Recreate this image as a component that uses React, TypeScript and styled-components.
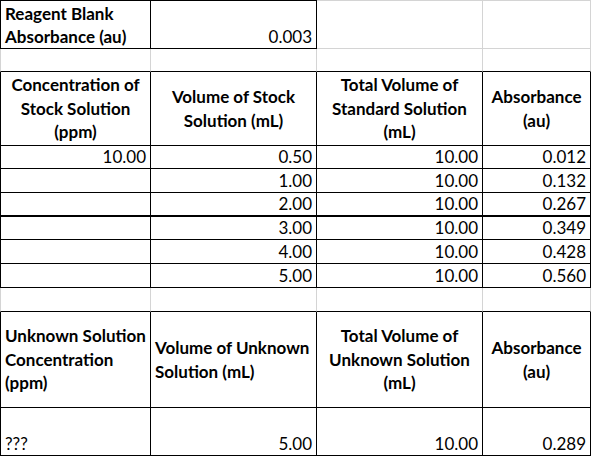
import styled, { createGlobalStyle } from 'styled-components'

const INK = '#000000'
const GRID = '#d4d4d4'

const GlobalStyle = createGlobalStyle`
  html, body {
    margin: 0;
    padding: 0;
    background: #ffffff;
  }
`

const Sheet = styled.table`
  border-collapse: separate;
  border-spacing: 0;
  table-layout: fixed;
  width: 591px;
  font-family: Lato, 'Open Sans', sans-serif;
  font-size: 17px;
  color: #000;
`

const Row = styled.tr<{ $h: number }>`
  height: ${({ $h }) => $h}px;
`

const Cell = styled.td<{
  $align?: 'left' | 'right' | 'center'
  $right?: string
  $bottom?: string
  $top?: string
  $left?: string
  $thick?: boolean
}>`
  box-sizing: border-box;
  padding: 0 4px 1px 4px;
  line-height: 21px;
  white-space: nowrap;
  overflow: hidden;
  text-align: ${({ $align }) => $align || 'right'};
  vertical-align: bottom;
  font-weight: 400;
  border-right: 1px solid ${({ $right }) => $right || INK};
  border-bottom: ${({ $thick }) => ($thick ? 2 : 1)}px solid ${({ $bottom }) => $bottom || INK};
  border-top: ${({ $top }) => ($top ? `1px solid ${$top}` : 'none')};
  border-left: ${({ $left }) => ($left ? `1px solid ${$left}` : 'none')};
`

const LabelCell = styled(Cell)`
  font-weight: 700;
  line-height: 23px;
  padding-bottom: 0;
`

const HeadCell = styled(Cell)`
  font-weight: 700;
  line-height: 23.5px;
  padding-bottom: 0;
  vertical-align: middle;
  text-align: ${({ $align }) => $align || 'center'};
`

const Col = styled.col<{ $w: number }>`
  width: ${({ $w }) => $w}px;
`

const standards = [
  { conc: '10.00', vol: '0.50', total: '10.00', abs: '0.012', h: 23 },
  { conc: '', vol: '1.00', total: '10.00', abs: '0.132', h: 24 },
  { conc: '', vol: '2.00', total: '10.00', abs: '0.267', h: 24, thick: true },
  { conc: '', vol: '3.00', total: '10.00', abs: '0.349', h: 23 },
  { conc: '', vol: '4.00', total: '10.00', abs: '0.428', h: 24 },
  { conc: '', vol: '5.00', total: '10.00', abs: '0.560', h: 24 },
]

const SpacerRow = ({ h }: { h: number }) => (
  <Row $h={h}>
    <Cell $left={GRID} $right={GRID} />
    <Cell $right={GRID} />
    <Cell $right={GRID} />
    <Cell $right={GRID} />
  </Row>
)

export default function App() {
  return (
    <>
      <GlobalStyle />
      <Sheet>
        <colgroup>
          <Col $w={151} />
          <Col $w={166} />
          <Col $w={166} />
          <Col $w={108} />
        </colgroup>
        <tbody>
          <Row $h={49}>
            <LabelCell $align="left" $top={INK} $left={INK}>
              Reagent Blank
              <br />
              Absorbance (au)
            </LabelCell>
            <Cell $top={INK}>0.003</Cell>
            <Cell $top={GRID} $right={GRID} $bottom={GRID} />
            <Cell $top={GRID} $right={GRID} $bottom={GRID} />
          </Row>
          <SpacerRow h={23} />
          <Row $h={74}>
            <HeadCell $left={INK}>
              Concentration of
              <br />
              Stock Solution
              <br />
              (ppm)
            </HeadCell>
            <HeadCell>
              Volume of Stock
              <br />
              Solution (mL)
            </HeadCell>
            <HeadCell>
              Total Volume of
              <br />
              Standard Solution
              <br />
              (mL)
            </HeadCell>
            <HeadCell>
              Absorbance
              <br />
              (au)
            </HeadCell>
          </Row>
          {standards.map((s, i) => (
            <Row key={i} $h={s.h}>
              <Cell $left={INK} $thick={s.thick}>{s.conc}</Cell>
              <Cell $thick={s.thick}>{s.vol}</Cell>
              <Cell $thick={s.thick}>{s.total}</Cell>
              <Cell $thick={s.thick}>{s.abs}</Cell>
            </Row>
          ))}
          <SpacerRow h={24} />
          <Row $h={96}>
            <HeadCell $align="left" $left={INK}>
              Unknown Solution
              <br />
              Concentration
              <br />
              (ppm)
            </HeadCell>
            <HeadCell $align="left">
              Volume of Unknown
              <br />
              Solution (mL)
            </HeadCell>
            <HeadCell>
              Total Volume of
              <br />
              Unknown Solution
              <br />
              (mL)
            </HeadCell>
            <HeadCell>
              Absorbance
              <br />
              (au)
            </HeadCell>
          </Row>
          <Row $h={48}>
            <Cell $align="left" $left={INK}>???</Cell>
            <Cell>5.00</Cell>
            <Cell>10.00</Cell>
            <Cell>0.289</Cell>
          </Row>
        </tbody>
      </Sheet>
    </>
  )
}
